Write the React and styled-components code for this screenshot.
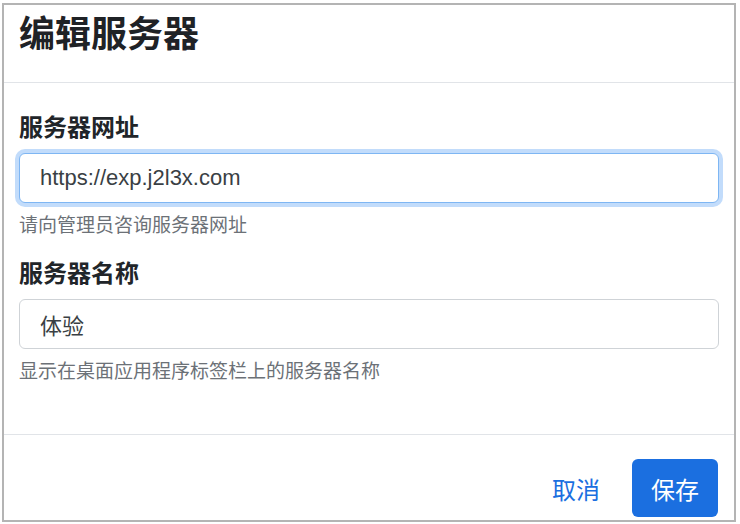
import React, { useState } from 'react';
import styled, { createGlobalStyle } from 'styled-components';

const GlobalStyle = createGlobalStyle`
  html, body {
    margin: 0;
    padding: 0;
    background: #ffffff;
  }
  body {
    font-family: "Liberation Sans", "Noto Sans CJK SC", sans-serif;
    color: #212529;
  }
  * {
    box-sizing: border-box;
  }
`;

function App() {
  const [url, setUrl] = useState('https://exp.j2l3x.com');
  const [name, setName] = useState('体验');

  return (
    <>
      <GlobalStyle />
      <Frame>
        <Header>
          <Title>编辑服务器</Title>
        </Header>
        <Body>
          <Field>
            <Label htmlFor="server-url">服务器网址</Label>
            <Input
              id="server-url"
              focused
              value={url}
              onChange={(e) => setUrl(e.target.value)}
            />
            <Help>请向管理员咨询服务器网址</Help>
          </Field>
          <Field>
            <Label htmlFor="server-name">服务器名称</Label>
            <Input
              id="server-name"
              value={name}
              onChange={(e) => setName(e.target.value)}
            />
            <Help>显示在桌面应用程序标签栏上的服务器名称</Help>
          </Field>
        </Body>
        <Footer>
          <Button variant="link">取消</Button>
          <Button variant="primary">保存</Button>
        </Footer>
      </Frame>
    </>
  );
}

const Frame = styled.div`
  margin: 3px 0 0 2px;
  width: 734px;
  height: 519px;
  border: 2px solid #b4b4b4;
  background: #ffffff;
  overflow: hidden;
  display: flex;
  flex-direction: column;
`;

const Header = styled.div`
  height: 78px;
  padding: 10px 15px 0;
  border-bottom: 1px solid #e1e4e8;
  flex-shrink: 0;
`;

const Title = styled.h1`
  margin: 0;
  font-size: 36px;
  line-height: 40px;
  font-weight: 700;
  color: #1f2226;
`;

const Body = styled.div`
  padding: 29px 15px 49px;
  display: flex;
  flex-direction: column;
  gap: 19px;
  border-bottom: 1px solid #e1e4e8;
  flex-shrink: 0;
`;

const Field = styled.div`
  display: flex;
  flex-direction: column;
`;

const Label = styled.label`
  font-size: 24px;
  line-height: 32px;
  font-weight: 700;
  color: #212529;
  margin-bottom: 9px;
`;

const Input = styled.input`
  width: 700px;
  height: 50px;
  padding: 0 20px;
  font-family: "Liberation Sans", "Noto Sans CJK SC", sans-serif;
  font-size: 22px;
  color: #3a3f44;
  background: #ffffff;
  border: 1px solid ${(p) => (p.focused ? '#7eb6f3' : '#cfd3d7')};
  border-radius: 6px;
  box-shadow: ${(p) => (p.focused ? '0 0 0 4px #c2dcfb' : 'none')};
  outline: none;
`;

const Help = styled.div`
  margin-top: 10px;
  font-size: 19px;
  line-height: 26px;
  color: #6c7177;
`;

const Footer = styled.div`
  display: flex;
  justify-content: flex-end;
  align-items: flex-start;
  gap: 13px;
  padding: 24px 16px 0;
`;

const Button = styled.button`
  height: 58px;
  padding: 0 19px;
  border-radius: 6px;
  font-family: "Liberation Sans", "Noto Sans CJK SC", sans-serif;
  font-size: 24px;
  cursor: pointer;
  border: none;
  background: ${(p) => (p.variant === 'primary' ? '#1b6fe0' : 'transparent')};
  color: ${(p) => (p.variant === 'primary' ? '#ffffff' : '#1b6fe0')};
`;

export default App;
